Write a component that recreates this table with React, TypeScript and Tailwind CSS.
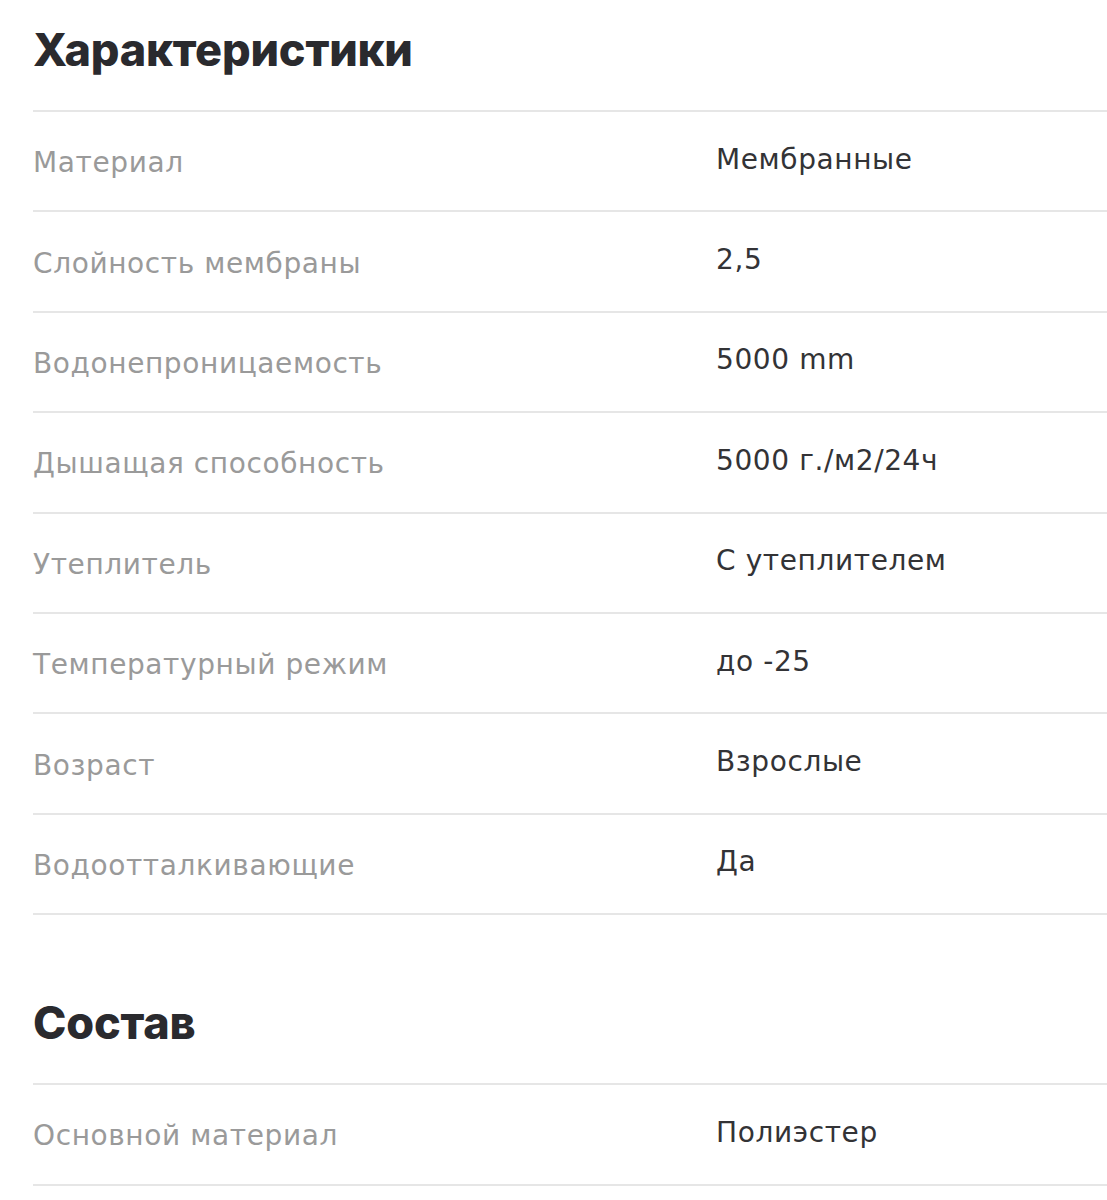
const specs = [
  ["Материал", "Мембранные"],
  ["Слойность мембраны", "2,5"],
  ["Водонепроницаемость", "5000 mm"],
  ["Дышащая способность", "5000 г./м2/24ч"],
  ["Утеплитель", "С утеплителем"],
  ["Температурный режим", "до -25"],
  ["Возраст", "Взрослые"],
  ["Водоотталкивающие", "Да"],
];

const composition = [["Основной материал", "Полиэстер"]];

function SpecTable({ rows }: { rows: string[][] }) {
  return (
    <div className="border-t-2 border-[#e6e6e6]">
      {rows.map(([label, value]) => (
        <div key={label} className="flex h-[100.4px] items-center border-b-2 border-[#e6e6e6] font-['DejaVu_Sans',sans-serif] text-[28px] tracking-[0.6px]">
          <span className="w-[683px] pt-[4px] text-[#9a9a9a]">{label}</span>
          <span className="pb-[3px] text-[#333336]">{value}</span>
        </div>
      ))}
    </div>
  );
}

export default function App() {
  return (
    <div className="min-h-[1200px] bg-white pl-[33px] font-['Inter','Noto_Sans',sans-serif]">
      <h2 className="pt-[22px] pb-[32px] text-[45px] leading-[56px] font-extrabold tracking-[-0.2px] text-[#2a2a2e]">Характеристики</h2>
      <SpecTable rows={specs} />
      <h2 className="pt-[80px] pb-[32px] text-[45px] leading-[56px] font-extrabold tracking-[-0.2px] text-[#2a2a2e]">Состав</h2>
      <SpecTable rows={composition} />
    </div>
  );
}
